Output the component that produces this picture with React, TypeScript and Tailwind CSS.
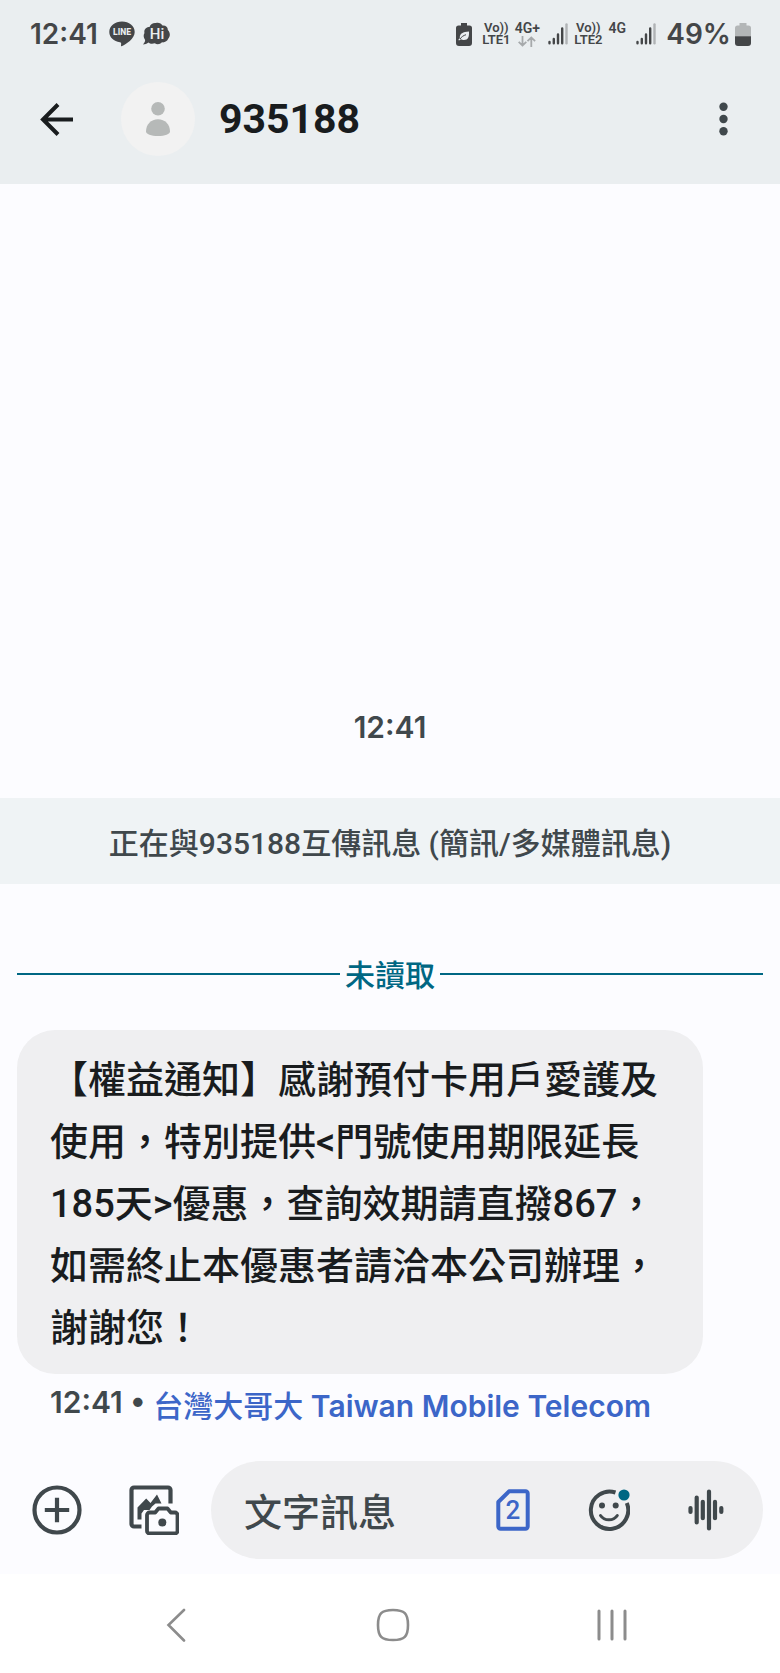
import type { ReactNode } from "react";

function LineIcon() {
  return (
    <svg width="26" height="26" viewBox="0 0 26 26" aria-hidden="true">
      <path d="M13 .5C6 .5.3 5 .3 11c0 5.300 4.600 9.500 10.600 10.300 1.500.3 1.400 1 1.100 3.300-.1.700.4.900 1.100.5C17 23 25.700 18 25.700 11 25.700 5 20 .5 13 .5z" fill="#444648" />
      <text x="13" y="14" textAnchor="middle" fontFamily="Roboto, sans-serif" fontSize="8.500" fontWeight="800" fill="#eaeef0">LINE</text>
    </svg>
  );
}

function HiIcon() {
  return (
    <svg width="27" height="24" viewBox="0 0 27 24" aria-hidden="true">
      <path d="M0 22.500c1.500-1.600 2.200-3 2.100-4.500C.2 15.500.4 12.500 1.500 11 .5 7.500 3.500 5 6.500 5 7.500 2 10.500.5 13 1c2.500-.8 5.500.5 6.500 2.500 3.500-.3 5.500 2 5.300 4.500 2.700 2.500 2.600 6.500.4 8.800-.9 2.500-3.700 4-6.200 3.500-2 2.300-5 2.500-7.200 1-3 1-5 .3-6.300-.8C4 21.500 2 22.500 0 22.500z" fill="#444648" />
      <text x="14" y="17" textAnchor="middle" fontFamily="Roboto, sans-serif" fontSize="15" fontWeight="500" fill="#eaeef0">Hi</text>
    </svg>
  );
}

function PowerSavingIcon() {
  return (
    <svg width="16" height="23" viewBox="0 0 16 23" aria-hidden="true">
      <path d="M5 0h6v2.500h2.500A2.500 2.500 0 0 1 16 5v15a3 3 0 0 1-3 3H3a3 3 0 0 1-3-3V5a2.500 2.500 0 0 1 2.500-2.500H5z" fill="#444648" />
      <path d="M13 8.500c.3 5-.8 8.500-5 8.500-1.300 0-2.400-.3-3-.8l-2 1.300-.7-.8 1.500-1.500C3.500 10.500 7 8.800 13 8.500z" fill="#eaeef0" />
      <path d="M4 16c1.500-2.200 3.500-3.500 6-4.300" fill="none" stroke="#444648" strokeWidth="1" />
    </svg>
  );
}

function SignalIcon() {
  return (
    <svg width="20" height="22" viewBox="0 0 20 22" strokeWidth="2.400" strokeLinecap="round" stroke="#444648" aria-hidden="true">
      <path d="M1.500 20.300v-1.300M5.800 20.300v-4.300M10 20.300V11.500M14.200 20.300V5.500" />
      <path d="M18.500 20.300V1.500" stroke="#b0b3b5" />
    </svg>
  );
}

function DataArrowsIcon() {
  return (
    <svg width="18" height="11" viewBox="0 0 18 11" fill="none" stroke="#a6a9ab" strokeWidth="1.800" aria-hidden="true">
      <path d="M4.500 0v9.500M.7 5.800l3.800 3.800 3.800-3.800M13.300 11V1.500M9.500 5.200l3.800-3.800 3.800 3.800" />
    </svg>
  );
}

function BatteryIcon() {
  return (
    <svg width="16" height="23" viewBox="0 0 16 23" aria-hidden="true">
      <path d="M4.500 0h7v2.500h2A2.500 2.500 0 0 1 16 5v8.500H0V5a2.500 2.500 0 0 1 2.500-2.500h2z" fill="#b3b6b7" />
      <path d="M0 13.200h16V20a3 3 0 0 1-3 3H3a3 3 0 0 1-3-3z" fill="#444648" />
    </svg>
  );
}

function BackArrowIcon() {
  return (
    <svg width="33" height="33" viewBox="0 0 33 33" fill="none" stroke="#191c1e" strokeWidth="4" aria-hidden="true">
      <path d="M33 16.500H3.500M18 1.500L3 16.500l15 15" />
    </svg>
  );
}

function PersonIcon() {
  return (
    <svg width="24" height="34" viewBox="0 0 24 34" fill="#b6b9b8" aria-hidden="true">
      <circle cx="12" cy="6.800" r="6.800" />
      <path d="M0 29.500C0 22.500 5 17.300 12 17.300s12 5.200 12 12.200c0 2.500-5 4.500-12 4.500S0 32 0 29.500z" />
    </svg>
  );
}

function MoreIcon() {
  return (
    <svg width="9" height="34" viewBox="0 0 9 34" fill="#40484c" aria-hidden="true">
      <circle cx="4.500" cy="4.700" r="4.200" />
      <circle cx="4.500" cy="17" r="4.200" />
      <circle cx="4.500" cy="29.300" r="4.200" />
    </svg>
  );
}

function AddIcon() {
  return (
    <svg width="50" height="50" viewBox="0 0 50 50" fill="none" stroke="#40484c" strokeWidth="4.200" aria-hidden="true">
      <circle cx="25" cy="25" r="22.500" />
      <path d="M25 12.800v24.400M12.800 25h24.400" />
    </svg>
  );
}

function GalleryIcon() {
  return (
    <svg width="50" height="50" viewBox="0 0 50 50" aria-hidden="true">
      <path d="M12.500 41.500H5a2.500 2.500 0 0 1-2.500-2.500V5A2.500 2.500 0 0 1 5 2.500h34A2.500 2.500 0 0 1 41.500 5v13.500" fill="none" stroke="#40484c" strokeWidth="4.200" />
      <path d="M8.500 34.500V22.500l8.700-9 4.300 4.500 6.500-8.500 4.500 9h-6l-3.500 3-2.500 3.500h-5.500l-2.500 3.500v6z" fill="#40484c" />
      <path d="M20.500 27.500h5.700l3.300-4h9l3.300 4h4.200a2.500 2.500 0 0 1 2.500 2.500v16a2.500 2.500 0 0 1-2.500 2.500H20.500A2.500 2.500 0 0 1 18 46V30a2.500 2.500 0 0 1 2.500-2.500z" fill="#fcfcff" stroke="#40484c" strokeWidth="3.800" strokeLinejoin="round" />
      <circle cx="33.300" cy="37.500" r="4" fill="#40484c" />
    </svg>
  );
}

function SimIcon() {
  return (
    <svg width="34" height="42" viewBox="0 0 34 42" aria-hidden="true">
      <path d="M13 2.300h16.500a2.200 2.200 0 0 1 2.200 2.200v33a2.200 2.200 0 0 1-2.200 2.200h-25a2.200 2.200 0 0 1-2.200-2.200v-24.500z" fill="none" stroke="#3c66c8" strokeWidth="4" strokeLinejoin="round" />
      <text x="17" y="30" textAnchor="middle" fontFamily="Roboto, sans-serif" fontSize="26" fontWeight="500" fill="#3c66c8">2</text>
    </svg>
  );
}

function EmojiIcon() {
  return (
    <svg width="42" height="42" viewBox="0 0 42 42" aria-hidden="true">
      <path d="M27.500 3.500A18.700 18.700 0 1 0 38.800 14" fill="none" stroke="#40484c" strokeWidth="4" />
      <circle cx="14" cy="16.500" r="3" fill="#40484c" />
      <circle cx="27.700" cy="16.500" r="3" fill="#40484c" />
      <path d="M12.500 26.500c3.800 5.800 13 5.800 16.800 0" fill="none" stroke="#40484c" strokeWidth="3" strokeLinecap="round" />
      <circle cx="36" cy="6" r="5.600" fill="#006783" />
    </svg>
  );
}

function VoiceIcon() {
  return (
    <svg width="36" height="42" viewBox="0 0 36 42" stroke="#40484c" strokeWidth="4.200" strokeLinecap="round" aria-hidden="true">
      <path d="M2.500 19v4M8.700 8.500v25M14.800 12.800v16.400M21 2.500v37M27 12.800v16.400M33.300 19v4" />
    </svg>
  );
}

function IconButton({ label, children }: { label: string; children: ReactNode }) {
  return (
    <button type="button" aria-label={label} className="flex flex-shrink-0 items-center justify-center">
      {children}
    </button>
  );
}

function VolteLabel({ sim }: { sim: number }) {
  return (
    <span className="flex w-7 flex-col items-center text-[13px] leading-3 font-semibold">
      <span>Vo))</span>
      <span>LTE{sim}</span>
    </span>
  );
}

function StatusBar() {
  return (
    <div className="flex h-16 items-center justify-between pt-1 pr-[29px] pl-[30px] text-[#444648]">
      <div className="flex items-center gap-2">
        <span className="mr-[3px] font-['Inter',sans-serif] text-[28px] leading-8 font-semibold">12:41</span>
        <LineIcon />
        <HiIcon />
      </div>
      <div className="flex items-center">
        <PowerSavingIcon />
        <div className="ml-2.5 flex items-center gap-[5px]">
          <VolteLabel sim={1} />
          <span className="flex w-6 flex-col items-center gap-0.5 text-sm leading-3 font-semibold">
            4G+
            <DataArrowsIcon />
          </span>
        </div>
        <div className="ml-[9px] flex items-center gap-1.5">
          <SignalIcon />
          <VolteLabel sim={2} />
        </div>
        <div className="ml-1.5 flex items-center gap-2.5">
          <span className="h-6 w-[18px] text-center text-sm leading-3 font-semibold">4G</span>
          <SignalIcon />
          <span className="font-['Inter',sans-serif] text-[28px] leading-8 font-semibold">49%</span>
        </div>
        <div className="ml-1">
          <BatteryIcon />
        </div>
      </div>
    </div>
  );
}

function ChatHeader() {
  return (
    <div className="flex items-center pt-[18px] pr-[52px] pb-7 pl-10">
      <IconButton label="返回">
        <BackArrowIcon />
      </IconButton>
      <div className="ml-12 flex size-[74px] items-center justify-center rounded-full bg-[#f2f2f2]">
        <PersonIcon />
      </div>
      <h1 className="ml-6 flex-1 text-[41px] leading-[48px] font-bold text-[#191c1e]">935188</h1>
      <IconButton label="更多選項">
        <MoreIcon />
      </IconButton>
    </div>
  );
}

function UnreadDivider() {
  return (
    <div className="mt-[66px] flex items-center gap-[5px] px-[17px] text-[#006783]">
      <span className="h-0.5 flex-1 bg-current" />
      <span className="pt-1 text-[30px] leading-[44px] font-medium">未讀取</span>
      <span className="h-0.5 flex-1 bg-current" />
    </div>
  );
}

function Composer() {
  return (
    <form className="flex items-center px-[17px] pt-[30px] pb-[15px]" onSubmit={(e) => e.preventDefault()}>
      <div className="flex gap-[47px] pr-8 pl-[15px]">
        <IconButton label="新增附件">
          <AddIcon />
        </IconButton>
        <IconButton label="圖片庫和相機">
          <GalleryIcon />
        </IconButton>
      </div>
      <div className="flex h-[98px] min-w-0 flex-1 items-center rounded-full bg-[#efeff1] pr-[39px] pl-[33px]">
        <input
          type="text"
          aria-label="文字訊息"
          placeholder="文字訊息"
          className="h-16 min-w-0 flex-1 bg-transparent pt-1.5 text-[38px] font-medium text-[#191c1e] outline-none placeholder:text-[#40484c]"
        />
        <div className="flex items-center gap-[58px]">
          <IconButton label="SIM 卡 2">
            <SimIcon />
          </IconButton>
          <IconButton label="表情符號">
            <EmojiIcon />
          </IconButton>
          <IconButton label="語音訊息">
            <VoiceIcon />
          </IconButton>
        </div>
      </div>
    </form>
  );
}

function NavBar() {
  return (
    <nav className="flex h-[99px] items-center justify-center gap-[187px] bg-white pt-0.5 pl-2.5">
      <IconButton label="上一頁">
        <svg width="26" height="34" viewBox="0 0 26 34" fill="none" stroke="#8c8c8c" strokeWidth="2.600" strokeLinecap="round" aria-hidden="true">
          <path d="M21 2L5.500 17 21 32.500" />
        </svg>
      </IconButton>
      <IconButton label="主畫面">
        <svg width="34" height="34" viewBox="0 0 34 34" fill="none" stroke="#8c8c8c" strokeWidth="2.600" aria-hidden="true">
          <path d="M17 2c11.500 0 15 3.500 15 15s-3.500 15-15 15S2 28.500 2 17 5.500 2 17 2z" />
        </svg>
      </IconButton>
      <IconButton label="最近使用">
        <svg width="30" height="34" viewBox="0 0 30 34" fill="none" stroke="#8c8c8c" strokeWidth="3" strokeLinecap="round" aria-hidden="true">
          <path d="M2 3v28M15 3v28M28 3v28" />
        </svg>
      </IconButton>
    </nav>
  );
}

export default function App() {
  return (
    <div lang="zh-TW" className="flex min-h-screen flex-col bg-[#fcfcff] font-['Roboto','Noto_Sans_CJK_TC',sans-serif]">
      <header className="bg-[#eaeef0]">
        <StatusBar />
        <ChatHeader />
      </header>

      <main className="flex flex-1 flex-col justify-end">
        <time className="text-center font-['Inter',sans-serif] text-[30px] leading-9 font-semibold text-[#40484c]">12:41</time>
        <p className="mt-[53px] bg-[#eff3f5] px-4 pt-[23px] pb-[18px] text-center text-[30px] leading-[45px] font-medium text-[#40484c]">
          正在與935188互傳訊息 (簡訊/多媒體訊息)
        </p>
        <UnreadDivider />
        <div className="mt-8 pr-[77px] pl-[17px]">
          <p className="rounded-[38px] bg-[#efeff1] px-[33px] pt-[19px] pb-[15px] text-[38px] leading-[62px] font-medium text-[#191c1e]">
            【權益通知】感謝預付卡用戶愛護及使用，特別提供&lt;門號使用期限延長185天&gt;優惠，查詢效期請直撥867，如需終止本優惠者請洽本公司辦理，謝謝您！
          </p>
          <div className="flex items-start gap-2 pt-2 pl-[33px] text-[30px]">
            <span className="font-['Inter',sans-serif] leading-10 font-semibold text-[#40484c]">12:41 •</span>
            <span className="leading-[48px] font-medium text-[#3c66c8]">
              台灣大哥大 <span className="font-['Inter',sans-serif] font-semibold">Taiwan Mobile Telecom</span>
            </span>
          </div>
        </div>
      </main>

      <Composer />
      <NavBar />
    </div>
  );
}
